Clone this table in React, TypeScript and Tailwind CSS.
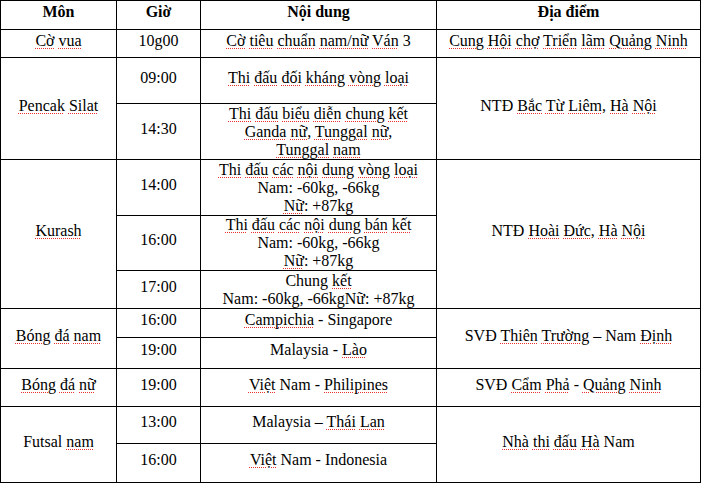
import React from "react";

function T({ s }: { s: string }) {
  const lines = s.split("\n");
  return (
    <>
      {lines.map((line, li) => (
        <div key={li}>
          {line.split(" ").map((tok, i) => {
            const sp = i > 0 ? " " : "";
            if (tok.startsWith("~")) {
              const m = tok.slice(1).match(/^(.*?)([,:.]*)$/);
              const w = m ? m[1] : tok.slice(1);
              const p = m ? m[2] : "";
              return (
                <React.Fragment key={i}>
                  {sp}
                  <span className="underline decoration-dotted decoration-[#e83030] decoration-[1px] underline-offset-[2px]">
                    {w}
                  </span>
                  {p}
                </React.Fragment>
              );
            }
            return (
              <React.Fragment key={i}>
                {sp}
                {tok}
              </React.Fragment>
            );
          })}
        </div>
      ))}
    </>
  );
}

const cell = "border border-black text-center align-middle px-1 pb-[6px] pt-0 leading-[18px]";
const tight = "border border-black text-center align-middle px-1 py-0 leading-[18px]";

export default function App() {
  return (
    <div className="w-[701px] h-[483px] bg-white overflow-hidden font-['Liberation_Serif','Times_New_Roman',serif] text-[16px] text-black">
      <table className="w-[700px] border-collapse table-fixed">
        <colgroup>
          <col className="w-[116px]" />
          <col className="w-[84px]" />
          <col className="w-[236px]" />
          <col className="w-[264px]" />
        </colgroup>
        <tbody>
          <tr className="h-[29px]">
            <td className={cell + " font-bold"}>Môn</td>
            <td className={cell + " font-bold"}>Giờ</td>
            <td className={cell + " font-bold"}>Nội dung</td>
            <td className={cell + " font-bold"}>Địa điểm</td>
          </tr>
          <tr className="h-[28px]">
            <td className={cell}><T s="~Cờ ~vua" /></td>
            <td className={cell}>10g00</td>
            <td className={cell}><T s="~Cờ ~tiêu ~chuẩn ~nam/nữ ~Ván 3" /></td>
            <td className={cell}><T s="~Cung ~Hội ~chợ ~Triển ~lãm ~Quảng ~Ninh" /></td>
          </tr>
          <tr className="h-[46px]">
            <td className={cell} rowSpan={2}><T s="~Pencak ~Silat" /></td>
            <td className={cell}>09:00</td>
            <td className={cell}><T s="~Thi ~đấu ~đối ~kháng ~vòng ~loại" /></td>
            <td className={cell} rowSpan={2}><T s="NTĐ ~Bắc ~Từ ~Liêm, ~Hà ~Nội" /></td>
          </tr>
          <tr className="h-[56px]">
            <td className={cell}>14:30</td>
            <td className={tight + " leading-[17px]"}>
              <T s={"~Thi ~đấu ~biểu ~diễn ~chung ~kết\n~Ganda ~nữ, ~Tunggal ~nữ,\n~Tunggal ~nam"} />
            </td>
          </tr>
          <tr className="h-[56px]">
            <td className={cell} rowSpan={3}><T s="~Kurash" /></td>
            <td className={cell}>14:00</td>
            <td className={tight}>
              <T s={"~Thi ~đấu ~các ~nội ~dung ~vòng ~loại\nNam: -60kg, -66kg\n~Nữ: +87kg"} />
            </td>
            <td className={cell} rowSpan={3}><T s="NTĐ ~Hoài ~Đức, ~Hà ~Nội" /></td>
          </tr>
          <tr className="h-[55px]">
            <td className={cell}>16:00</td>
            <td className={tight}>
              <T s={"~Thi ~đấu ~các ~nội ~dung ~bán ~kết\nNam: -60kg, -66kg\n~Nữ: +87kg"} />
            </td>
          </tr>
          <tr className="h-[38px]">
            <td className={cell}>17:00</td>
            <td className={tight}>
              <T s={"Chung ~kết\nNam: -60kg, -66kgNữ: +87kg"} />
            </td>
          </tr>
          <tr className="h-[29px]">
            <td className={cell} rowSpan={2}><T s="~Bóng ~đá ~nam" /></td>
            <td className={cell}>16:00</td>
            <td className={cell}><T s="~Campichia - Singapore" /></td>
            <td className={cell} rowSpan={2}><T s="SVĐ ~Thiên ~Trường – Nam ~Định" /></td>
          </tr>
          <tr className="h-[31px]">
            <td className={cell}>19:00</td>
            <td className={cell}><T s="Malaysia - ~Lào" /></td>
          </tr>
          <tr className="h-[38px]">
            <td className={cell}><T s="~Bóng ~đá ~nữ" /></td>
            <td className={cell}>19:00</td>
            <td className={cell}><T s="~Việt Nam - ~Philipines" /></td>
            <td className={cell}><T s="SVĐ ~Cẩm ~Phả - ~Quảng ~Ninh" /></td>
          </tr>
          <tr className="h-[37px]">
            <td className={cell} rowSpan={2}><T s="Futsal ~nam" /></td>
            <td className={cell}>13:00</td>
            <td className={cell}><T s="Malaysia – ~Thái ~Lan" /></td>
            <td className={cell} rowSpan={2}><T s="~Nhà ~thi ~đấu ~Hà Nam" /></td>
          </tr>
          <tr className="h-[39px]">
            <td className={cell}>16:00</td>
            <td className={cell}><T s="~Việt Nam - Indonesia" /></td>
          </tr>
        </tbody>
      </table>
    </div>
  );
}
